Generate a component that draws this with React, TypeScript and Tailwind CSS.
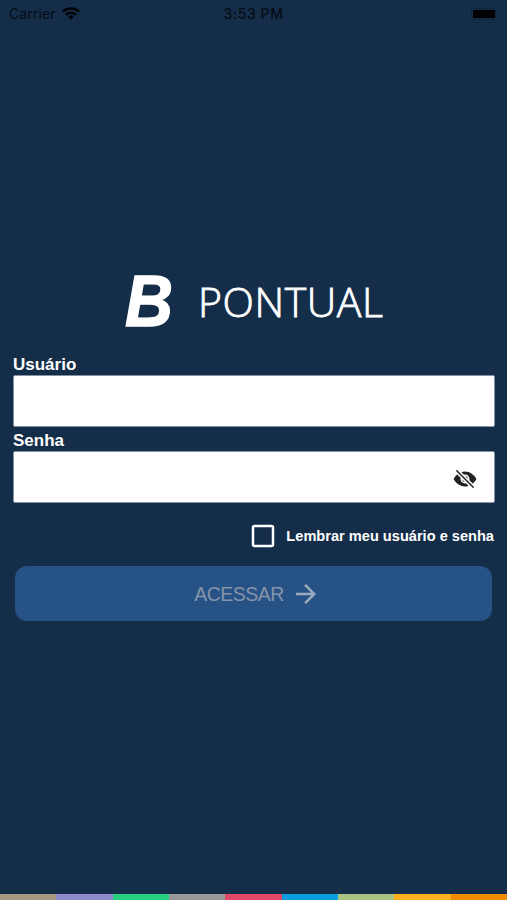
import { useState } from "react";
import { IoEyeOff } from "react-icons/io5";
import { MdArrowForward, MdCheckBox, MdCheckBoxOutlineBlank } from "react-icons/md";

const stripes = [
  "bg-[#a8977f]",
  "bg-[#8d89cb]",
  "bg-[#28cf7c]",
  "bg-[#96989a]",
  "bg-[#e04868]",
  "bg-[#069ddf]",
  "bg-[#a9c381]",
  "bg-[#fbb11f]",
  "bg-[#f08c00]",
];

function StatusBar() {
  return (
    <div className="grid h-[27px] grid-cols-3 items-center pl-[9px] pr-[9px] font-['Inter',sans-serif] text-[14px] text-[#050c14]">
      <div className="flex items-center gap-[6px]">
        <span className="tracking-[0.1px]">Carrier</span>
        <svg width="18" height="13" viewBox="0 0 18 13" fill="none" stroke="#000" strokeWidth="2.4">
          <path d="M1 4.6a11.5 11.5 0 0 1 16 0" />
          <path d="M4 7.8a7.2 7.2 0 0 1 10 0" />
          <path d="M9 12.6 6.3 9.9a3.9 3.9 0 0 1 5.4 0z" fill="#000" stroke="none" />
        </svg>
      </div>
      <span className="text-center font-medium tracking-[0.6px] whitespace-nowrap">3:53 PM</span>
      <svg className="justify-self-end" width="27" height="12" viewBox="0 0 27 12">
        <rect x="0.5" y="0.5" width="24" height="11" rx="2.5" fill="none" stroke="#0e243c" />
        <rect x="2" y="2" width="22" height="8" rx="1" fill="#000" />
      </svg>
    </div>
  );
}

function App() {
  const [user, setUser] = useState("");
  const [password, setPassword] = useState("");
  const [showPassword, setShowPassword] = useState(false);
  const [remember, setRemember] = useState(false);

  return (
    <div className="flex h-[900px] w-full flex-col bg-[#142d49] font-['Liberation_Sans',Arial,sans-serif] text-white">
      <StatusBar />

      <main className="flex-1 pt-[239px] pr-[12px] pl-[13px]">
        {/* Logo */}
        <div className="flex h-[70px] items-center pl-[112px]">
          <span className="w-[73px] origin-left scale-x-[0.91] text-[73px] leading-[70px] font-bold italic [-webkit-text-stroke:1.4px_white]">
            B
          </span>
          <span className="font-['Open_Sans',sans-serif] text-[41px] leading-[70px] font-light tracking-[0.6px] [-webkit-text-stroke:0.8px_white]">
            PONTUAL
          </span>
        </div>

        <form onSubmit={(e) => e.preventDefault()}>
          <label htmlFor="user" className="mt-[18px] block text-[17px] leading-[21px] font-bold">
            Usuário
          </label>
          <input
            id="user"
            value={user}
            onChange={(e) => setUser(e.target.value)}
            className="block h-[52px] w-full rounded-[2px] border border-[#8793a0] bg-white px-3 text-black outline-none"
          />

          <label htmlFor="password" className="mt-[3px] block text-[17px] leading-[21px] font-bold">
            Senha
          </label>
          <div className="flex h-[52px] items-center rounded-[2px] border border-[#8793a0] bg-white pr-[17px]">
            <input
              id="password"
              type={showPassword ? "text" : "password"}
              value={password}
              onChange={(e) => setPassword(e.target.value)}
              className="h-full flex-1 px-3 text-black outline-none"
            />
            <button type="button" className="mt-[4px]" onClick={() => setShowPassword(!showPassword)}>
              <IoEyeOff size={24} color="#222" />
            </button>
          </div>

          <button
            type="button"
            onClick={() => setRemember(!remember)}
            className="mt-[17px] mr-[1px] ml-auto flex h-[31px] items-center gap-2"
          >
            {remember ? <MdCheckBox size={30} /> : <MdCheckBoxOutlineBlank size={30} />}
            <span className="mt-[3px] text-[14.6px] font-bold whitespace-nowrap">
              Lembrar meu usuário e senha
            </span>
          </button>

          <button
            type="submit"
            className="mt-[15px] ml-[2px] flex h-[55px] w-[477px] items-center justify-center gap-[7px] rounded-[12px] bg-[#265285] pl-[8px] text-[#8394ab]"
          >
            <span className="mt-[2px] text-[19.5px] tracking-[-0.5px]">ACESSAR</span>
            <MdArrowForward size={30} color="#9caabd" />
          </button>
        </form>
      </main>

      <div className="flex h-[6px]">
        {stripes.map((color) => (
          <div key={color} className={`flex-1 ${color}`} />
        ))}
      </div>
    </div>
  );
}

export default App;
